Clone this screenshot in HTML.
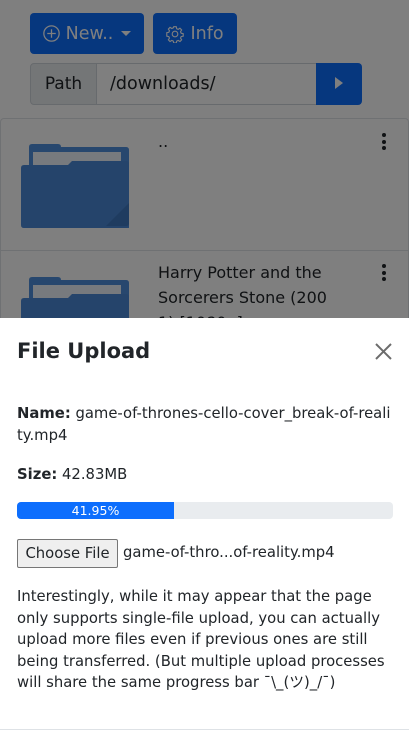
<!DOCTYPE html>
<html><head><meta charset="utf-8"><style>
*{box-sizing:border-box;margin:0;padding:0}
body{width:409px;height:732px;overflow:hidden;position:relative;background:#fff;font-family:"DejaVu Sans","Liberation Sans","Noto Sans CJK JP",sans-serif;color:#212529}
.a{position:absolute}
.btn{background:#0d6efd;color:#fff;border-radius:4px;font-size:17.5px;display:flex;align-items:center;justify-content:center;gap:6px}
.ov{position:absolute;left:0;top:0;width:409px;height:732px;background:rgba(0,0,0,.5)}
.fname{font-size:16px;line-height:25px}
</style></head><body>
<div class="a btn" style="left:30px;top:13px;width:114px;height:41px">
<svg width="17" height="17" viewBox="0 0 16 16" fill="none" stroke="#fff" stroke-width="1.2"><circle cx="8" cy="8" r="7.2"/><path d="M8 4v8M4 8h8"/></svg>New..<span style="border-left:5px solid transparent;border-right:5px solid transparent;border-top:5px solid #fff;margin-left:2px"></span></div>
<div class="a btn" style="left:153px;top:13px;width:84px;height:41px">
<svg width="18" height="18" viewBox="0 0 16 16" fill="none" stroke="#fff" stroke-width="1"><circle cx="8" cy="8" r="2.5"/><path d="M6.9 1.5h2.2l.4 1.8 1.3.6 1.6-1 1.5 1.5-1 1.6.6 1.3 1.8.4v2.2l-1.8.4-.6 1.3 1 1.6-1.5 1.5-1.6-1-1.3.6-.4 1.8H6.9l-.4-1.8-1.3-.6-1.6 1-1.5-1.5 1-1.6-.6-1.3-1.8-.4V6.9l1.8-.4.6-1.3-1-1.6 1.5-1.5 1.6 1 1.3-.6z"/></svg>Info</div>
<div class="a" style="left:30px;top:63px;width:67px;height:42px;background:#e9ecef;border:1px solid #ced4da;border-radius:4px 0 0 4px;font-size:17px;line-height:40px;text-align:center">Path</div>
<div class="a" style="left:96px;top:63px;width:221px;height:42px;border:1px solid #ced4da;font-size:17.5px;line-height:40px;padding-left:13px">/downloads/</div>
<div class="a" style="left:316px;top:63px;width:46px;height:42px;background:#0d6efd;border-radius:0 4px 4px 0"><span class="a" style="left:19px;top:14px;border-top:6px solid transparent;border-bottom:6px solid transparent;border-left:8px solid #fff"></span></div>
<div class="a" style="left:0;top:118px;width:409px;height:300px;border:1px solid #dee2e6;border-radius:4px"></div>
<div class="a" style="left:0;top:250px;width:409px;height:1px;background:#dee2e6"></div>
<svg class="a" style="left:21px;top:143px" width="108" height="85" viewBox="0 0 108 85"><path d="M8 4q0-3 3-3h26q3 0 3 3h65q3 0 3 3v80H8z" fill="#4f8fdc"/><rect x="12" y="9" width="88" height="30" fill="#fff" opacity=".9"/><path d="M0 25q0-3 3-3h44l4-4h54q3 0 3 3v61q0 3-3 3H3q-3 0-3-3z" fill="#4a89d6"/><path d="M108 60v20q0 3-3 3H85z" fill="#3f78c0"/></svg>
<div class="a fname" style="left:158px;top:129px">..</div>
<div class="a" style="left:382px;top:133px;width:4px;font-size:0"><div style="width:4px;height:4px;border-radius:2px;background:#212529;margin-bottom:2.5px"></div><div style="width:4px;height:4px;border-radius:2px;background:#212529;margin-bottom:2.5px"></div><div style="width:4px;height:4px;border-radius:2px;background:#212529"></div></div>
<svg class="a" style="left:21px;top:276px" width="108" height="85" viewBox="0 0 108 85"><path d="M8 4q0-3 3-3h26q3 0 3 3h65q3 0 3 3v80H8z" fill="#4f8fdc"/><rect x="12" y="9" width="88" height="30" fill="#fff" opacity=".9"/><path d="M0 25q0-3 3-3h44l4-4h54q3 0 3 3v61q0 3-3 3H3q-3 0-3-3z" fill="#4a89d6"/></svg>
<div class="a fname" style="left:158px;top:260px">Harry Potter and the<br>Sorcerers Stone (200<br>1) [1080p]</div>
<div class="a" style="left:382px;top:264px;width:4px;font-size:0"><div style="width:4px;height:4px;border-radius:2px;background:#212529;margin-bottom:2.5px"></div><div style="width:4px;height:4px;border-radius:2px;background:#212529;margin-bottom:2.5px"></div><div style="width:4px;height:4px;border-radius:2px;background:#212529"></div></div>
<div class="ov"></div>
<div class="a" style="left:0;top:318px;width:409px;height:414px;background:#fff">
<div class="a" style="left:17px;top:20px;font-size:21px;font-weight:bold;line-height:26px">File Upload</div>
<svg class="a" style="left:374px;top:24px" width="19" height="19" viewBox="0 0 19 19" stroke="#6c6c6c" stroke-width="2"><path d="M2 2l15 15M17 2L2 17"/></svg>
<div class="a" style="left:17px;top:85px;width:385px;font-size:14.8px;line-height:21.5px"><b>Name:</b> game-of-thrones-cello-cover_break-of-reali<br>ty.mp4</div>
<div class="a" style="left:17px;top:146px;font-size:14.8px;line-height:21.5px"><b>Size:</b> 42.83MB</div>
<div class="a" style="left:17px;top:184px;width:376px;height:17px;background:#e9ecef;border-radius:4px;overflow:hidden"><div style="width:157px;height:17px;background:#0d6efd;color:#fff;font-size:12.5px;line-height:17px;text-align:center">41.95%</div></div>
<div class="a" style="left:17px;top:221px;width:101px;height:29px;background:#efefef;border:1px solid #767676;border-radius:2px;font-size:14.8px;line-height:27px;text-align:center">Choose File</div>
<div class="a" style="left:123px;top:224px;font-size:14.8px;line-height:22px">game-of-thro...of-reality.mp4</div>
<div class="a" style="left:17px;top:268px;width:390px;font-size:14.8px;line-height:21.6px">Interestingly, while it may appear that the page<br>only supports single-file upload, you can actually<br>upload more files even if previous ones are still<br>being transferred. (But multiple upload processes<br>will share the same progress bar ¯\_(ツ)_/¯)</div>
<div class="a" style="left:0;top:411px;width:409px;height:1px;background:#dee2e6"></div>
</div>
</body></html>
